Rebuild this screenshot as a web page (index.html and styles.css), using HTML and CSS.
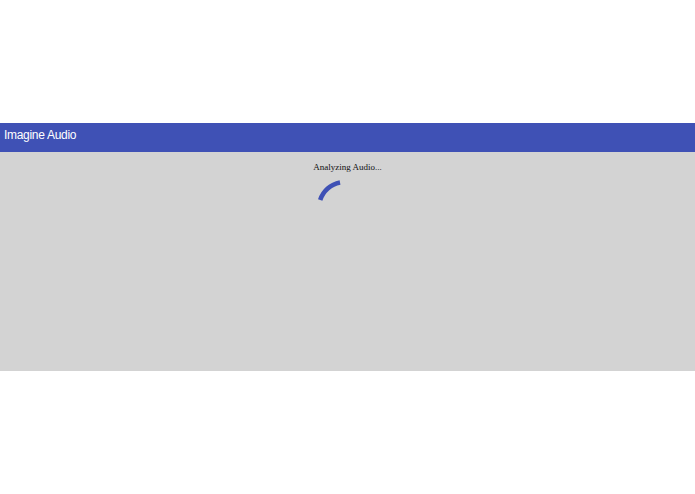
FILE: index.html
```html
<!DOCTYPE html>
<html>
<head>
<meta charset="utf-8">
<link rel="stylesheet" href="styles.css">
</head>
<body>
<div class="app">
  <header class="bar">Imagine Audio</header>
  <main class="content">
    <div class="status">Analyzing Audio...</div>
    <svg class="spinner" width="34" height="30" viewBox="0 0 34 30">
      <path d="M5.2 22.05 A26 26 0 0 1 25.04 4.47" fill="none" stroke="#3f51b5" stroke-width="4.6"/>
    </svg>
  </main>
</div>
</body>
</html>
```
FILE: styles.css
```css
html, body {
  margin: 0;
  padding: 0;
  height: 100%;
  background: #ffffff;
}
body {
  display: flex;
  flex-direction: column;
  justify-content: center;
}
.app {
  height: 248px;
  display: flex;
  flex-direction: column;
}
.bar {
  height: 29px;
  background: #3f51b5;
  color: #ffffff;
  font-family: "Liberation Sans", Arial, sans-serif;
  font-size: 12px;
  letter-spacing: -0.3px;
  line-height: 24px;
  padding-left: 4px;
}
.content {
  flex: 1;
  background: #d3d3d3;
  display: flex;
  flex-direction: column;
  align-items: center;
  padding-top: 9px;
}
.status {
  font-family: "Liberation Serif", "Times New Roman", serif;
  font-size: 9px;
  line-height: 12px;
  color: #111;
}
.spinner {
  display: block;
  margin-top: 5px;
  margin-right: 31px;
}
```
